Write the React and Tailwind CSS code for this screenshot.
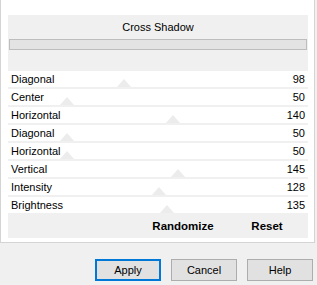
import React from "react";

const rows = [
  ["Diagonal", 98],
  ["Center", 50],
  ["Horizontal", 140],
  ["Diagonal", 50],
  ["Horizontal", 50],
  ["Vertical", 145],
  ["Intensity", 128],
  ["Brightness", 135],
];

function Row({ label, value }) {
  const x = (value / 255) * 298 + 1;
  return (
    <div className="relative h-[16px] mb-[2px] bg-white flex items-center justify-between pl-[3px] pr-[3px]">
      <svg
        className="absolute bottom-0"
        style={{ left: x - 7 }}
        width="14"
        height="8"
        viewBox="0 0 14 8"
      >
        <polygon points="7,0 14,8 0,8" fill="#ececec" />
      </svg>
      <span className="relative leading-none">{label}</span>
      <span className="relative leading-none">{value}</span>
    </div>
  );
}

export default function App() {
  return (
    <div className="w-[317px] h-[285px] bg-[#f0f0f0] text-black text-[11px] font-['Liberation_Sans',Arial,sans-serif] overflow-hidden">
      <div className="w-[315px] h-[243px] bg-white border-l border-r border-b border-[#d4d4d4] pl-[7px] pr-[6px] pt-[15px] pb-[4px]">
        <div className="h-[223px] bg-[#f0f0f0] flex flex-col">
          <div className="h-[24px] flex items-center justify-center text-[11px]">
            Cross Shadow
          </div>
          <div className="mx-[1px] h-[11px] bg-[#e3e3e3] border border-[#bdbdbd]" />
          <div className="h-[21px]" />
          {rows.map(([l, v], i) => (
            <Row key={i} label={l} value={v} />
          ))}
          <div className="flex-1 flex items-center justify-end pr-[11px] gap-[9px] font-bold text-[11.5px]">
            <div className="w-[90px] text-center">Randomize</div>
            <div className="w-[60px] text-center">Reset</div>
          </div>
        </div>
      </div>
      <div className="flex justify-end gap-[10px] pr-[4px] pt-[16px]">
        <button className="w-[66px] h-[22px] bg-[#e1e1e1] border-2 border-[#0078d7] text-[11px] flex items-center justify-center">
          Apply
        </button>
        <button className="w-[66px] h-[22px] bg-[#e1e1e1] border border-[#adadad] text-[11px] flex items-center justify-center">
          Cancel
        </button>
        <button className="w-[66px] h-[22px] bg-[#e1e1e1] border border-[#adadad] text-[11px] flex items-center justify-center">
          Help
        </button>
      </div>
    </div>
  );
}
